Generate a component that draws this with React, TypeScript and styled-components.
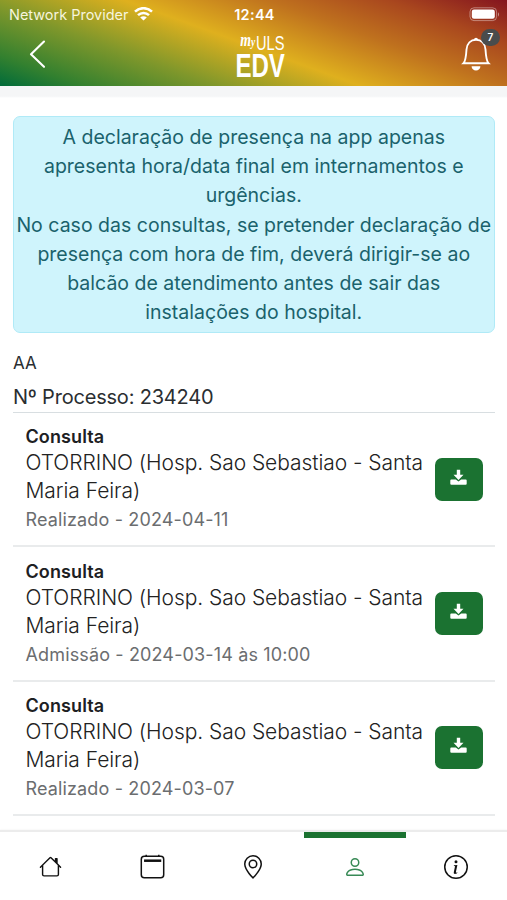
import React from "react";
import styled, { createGlobalStyle } from "styled-components";
import { BsHouse, BsGeoAlt, BsPerson, BsInfoCircle } from "react-icons/bs";

const GlobalStyle = createGlobalStyle`
  * { box-sizing: border-box; }
  body {
    margin: 0;
    background: #fff;
    font-family: Inter, "Liberation Sans", sans-serif;
    color: #2a2e31;
  }
`;

const Screen = styled.div`
  width: 507px;
  height: 900px;
  display: flex;
  flex-direction: column;
  overflow: hidden;
`;

const Header = styled.header`
  height: 86px;
  flex: none;
  color: #fff;
  background: linear-gradient(20deg, #006b3a 0%, #32802f 11%, #7f972b 29%, #dfb01e 48.5%, #bf711e 68%, #a9471e 84%, #84141f 100%);
`;

const StatusBar = styled.div`
  height: 28px;
  display: grid;
  grid-template-columns: 1fr auto 1fr;
  align-items: center;
  padding: 0 7px 0 9px;
  font-size: 14.5px;
`;

const Carrier = styled.div`
  display: flex;
  align-items: center;
  gap: 6px;
  letter-spacing: -0.02px;
  white-space: nowrap;
  color: #f7f5dc;
`;

const Clock = styled.div`
  font-weight: 600;
  letter-spacing: 0.3px;
`;

const BatterySlot = styled.div`
  display: flex;
  justify-content: flex-end;
`;

const TitleBar = styled.div`
  height: 58px;
  display: grid;
  grid-template-columns: 1fr 50px 1fr;
  padding: 0 16px 0 29px;
`;

const BackButton = styled.button`
  width: 20px;
  height: 30px;
  margin-top: 11px;
  padding: 0;
  border: 0;
  background: none;
  color: inherit;
`;

const Logo = styled.div`
  display: flex;
  flex-direction: column;
  align-items: flex-end;
  width: 48.5px;
  padding-top: 5px;
  white-space: nowrap;
`;

const LogoTop = styled.div`
  display: flex;
  align-items: baseline;
  height: 19px;
  margin-right: -1px;
  font: 20px/20px "Liberation Sans", sans-serif;
  transform: scaleX(0.73);
  transform-origin: right;
`;

const LogoScript = styled.span`
  font: italic 700 19px/16px "Liberation Serif", serif;
  transform: translateY(-4px);
  margin-right: 1px;
  small { font-size: 13px; }
`;

const LogoMain = styled.div`
  height: 28px;
  margin-right: -1px;
  font: 700 32.5px/29px "Liberation Sans", sans-serif;
  transform: scaleX(0.74);
  transform-origin: right;
`;

const BellButton = styled.button`
  position: relative;
  justify-self: end;
  width: 30px;
  height: 36px;
  margin-top: 9px;
  padding: 0;
  border: 0;
  background: none;
  color: #fff;
`;

const Badge = styled.span`
  position: absolute;
  top: -8px;
  right: -9px;
  width: 19px;
  height: 17px;
  border-radius: 9px;
  background: #4a4c4c;
  font: 600 10px/17px Inter, sans-serif;
  text-align: center;
`;

const HeaderStrip = styled.div`
  height: 12px;
  flex: none;
  background: linear-gradient(#f5f6f7 85%, #fff);
`;

const Content = styled.main`
  flex: 1;
  min-height: 0;
  padding: 18px 12.5px 0 13px;
  overflow: hidden;
`;

const Notice = styled.div`
  height: 217px;
  padding-top: 5.7px;
  border: 1.2px solid #b0eaf7;
  border-radius: 7px;
  background: #cff4fc;
  color: #1a626c;
  font-size: 19.5px;
  line-height: 29.3px;
  text-align: center;
  white-space: nowrap;
`;

const NoticeLine = styled.div`
  display: flex;
  justify-content: center;
  letter-spacing: 0.01px;
`;

const Patient = styled.div`
  margin-top: 20px;
  height: 20px;
  font-size: 17px;
  line-height: 20px;
`;

const ProcessNumber = styled.div`
  height: 40px;
  padding-top: 10px;
  border-bottom: 1px solid #d8dee1;
  font-size: 20px;
  line-height: 29px;
  letter-spacing: -0.2px;
`;

const Row = styled.article`
  height: 134.4px;
  display: flex;
  align-items: center;
  justify-content: space-between;
  padding: 0 12px 0 12.5px;
  border-bottom: 2px solid #e9ebec;
`;

const RowText = styled.div`
  white-space: nowrap;
  padding-top: 1.6px;
`;

const Kind = styled.div`
  font-weight: 600;
  font-size: 18px;
  line-height: 24px;
  letter-spacing: 0.1px;
  color: #1d2023;
`;

const Place = styled.div`
  font-size: 21px;
  font-weight: 300;
  line-height: 28px;
  letter-spacing: -0.06px;
  color: #222;
`;

const State = styled.div`
  font-size: 18px;
  line-height: 29px;
  letter-spacing: 0.14px;
  color: #6b6d6f;
`;

const DownloadButton = styled.button`
  flex: none;
  display: flex;
  align-items: center;
  justify-content: center;
  width: 48px;
  height: 43px;
  padding: 0 0 4px;
  border: 0;
  border-radius: 7px;
  background: #1b7231;
  color: #fff;
`;

const TabBar = styled.nav`
  height: 70px;
  flex: none;
  display: grid;
  grid-template-columns: repeat(5, 1fr);
  border-top: 2px solid #ececec;
  background: #fff;
  box-shadow: 0 0 2px #eee;
`;

const Tab = styled.div<{ $active?: boolean }>`
  display: flex;
  align-items: center;
  justify-content: center;
  border-top: 6px solid ${(p) => (p.$active ? "#1b7231" : "transparent")};
  padding-bottom: 5px;
  color: ${(p) => (p.$active ? "#388a56" : "#111")};
`;

const notice = [
  "A declaração de presença na app apenas",
  "apresenta hora/data final em internamentos e",
  "urgências.",
  "No caso das consultas, se pretender declaração de",
  "presença com hora de fim, deverá dirigir-se ao",
  "balcão de atendimento antes de sair das",
  "instalações do hospital.",
];

const visits = ["Realizado - 2024-04-11", "Admissão - 2024-03-14 às 10:00", "Realizado - 2024-03-07"];

const WifiIcon = () => (
  <svg width="19" height="14" viewBox="0 0 19 14" fill="none" stroke="#fff" strokeWidth="2.5">
    <path d="M1 4.6C5.8 0 13.2 0 18 4.6M4 8.2c3.1-3 7.9-3 11 0" />
    <path d="M6.2 10.4c1.8-1.5 4.8-1.5 6.6 0L9.5 13.6z" fill="#fff" stroke="none" />
  </svg>
);

const BatteryIcon = () => (
  <svg width="31" height="15" viewBox="0 0 31 15">
    <rect x="1" y=".8" width="26.600" height="12.8" rx="4" fill="none" stroke="#fff" strokeOpacity=".4" />
    <rect x="2.8" y="2.6" width="23" height="9.2" rx="2.2" fill="#fff" />
    <path d="M29 5.3q2 2.2 0 4.4z" fill="#fff" fillOpacity=".5" />
  </svg>
);

const BellIcon = () => (
  <svg width="30" height="36" viewBox="0 0 30 36" fill="none" stroke="#fff" strokeWidth="1.9">
    <path d="M2.5 26.2C4.8 24 5.2 17.5 5.5 12.5 6 6.5 9.7 2.8 15 2.8s9 3.7 9.5 9.7c.3 5 .7 11.5 3 13.7z" />
    <path d="M13 2.8a2 2 0 0 1 4 0z" fill="#fff" stroke="none" />
    <path d="M10.6 29.2h8.8a4.4 4.4 0 0 1-8.8 0z" fill="#fff" stroke="none" />
  </svg>
);

const DownloadIcon = () => (
  <svg width="17" height="17" viewBox="0 0 17 17" fill="currentColor">
    <path d="M6.8.8h3.4v4.9h3.3L8.5 11 3.500 5.700h3.300z" />
    <path d="M1.3 10.4h4.5l2.7 2.200 2.700-2.200h4.500q1 0 1 1v3.300q0 1-1 1H1.300q-1 0-1-1v-3.300q0-1 1-1z" />
  </svg>
);

const CalendarIcon = () => (
  <svg width="25" height="25" viewBox="0 0 25 25" fill="none" stroke="currentColor" strokeWidth="1.5">
    <rect x="1.3" y="2.3" width="22.4" height="21.4" rx="3" />
    <path d="M6.2.8v1.5M18.8.8v1.5" />
    <path d="M5.3 6.7h14.7" strokeWidth="2.5" strokeLinecap="square" />
  </svg>
);

export default function App() {
  return (
    <>
      <GlobalStyle />
      <Screen>
        <Header>
          <StatusBar>
            <Carrier>Network Provider <WifiIcon /></Carrier>
            <Clock>12:44</Clock>
            <BatterySlot><BatteryIcon /></BatterySlot>
          </StatusBar>
          <TitleBar>
            <BackButton aria-label="Voltar">
              <svg width="20" height="30" viewBox="0 0 20 30" fill="none" stroke="#fff" strokeWidth="2.1" strokeLinecap="round" strokeLinejoin="round">
                <path d="M15 2.5 2 15.3l13 12.5" />
              </svg>
            </BackButton>
            <Logo>
              <LogoTop><LogoScript>m<small>y</small></LogoScript>ULS</LogoTop>
              <LogoMain>EDV</LogoMain>
            </Logo>
            <BellButton aria-label="Notificações">
              <BellIcon />
              <Badge>7</Badge>
            </BellButton>
          </TitleBar>
        </Header>
        <HeaderStrip />
        <Content>
          <Notice>
            {notice.map((text) => (
              <NoticeLine key={text}>{text}</NoticeLine>
            ))}
          </Notice>
          <Patient>AA</Patient>
          <ProcessNumber>Nº Processo: 234240</ProcessNumber>
          {visits.map((state) => (
            <Row key={state}>
              <RowText>
                <Kind>Consulta</Kind>
                <Place>OTORRINO (Hosp. Sao Sebastiao - Santa<br />Maria Feira)</Place>
                <State>{state}</State>
              </RowText>
              <DownloadButton aria-label="Descarregar"><DownloadIcon /></DownloadButton>
            </Row>
          ))}
        </Content>
        <TabBar>
          <Tab><BsHouse size={23} /></Tab>
          <Tab><CalendarIcon /></Tab>
          <Tab><BsGeoAlt size={24} /></Tab>
          <Tab $active><BsPerson size={24} /></Tab>
          <Tab><BsInfoCircle size={24} /></Tab>
        </TabBar>
      </Screen>
    </>
  );
}
